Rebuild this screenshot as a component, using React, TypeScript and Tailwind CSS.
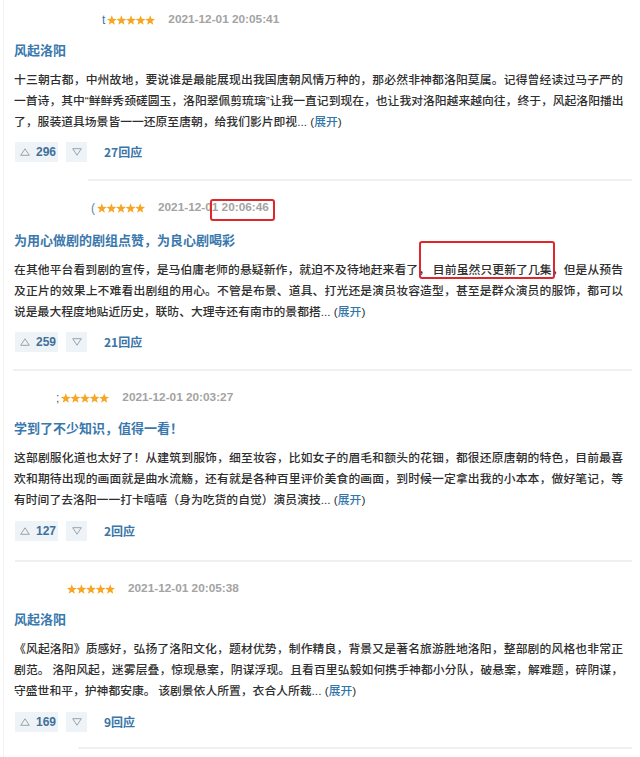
import React from "react";

type Card = {
  prefix: string;
  prefixClass: string;
  headerPl: string;
  date: string;
  title: string;
  lines: React.ReactNode[];
  last: React.ReactNode;
  up: string;
  replies: string;
  sepMl: string;
  titleMt: string;
  btnMt: string;
  sepMt: string;
};

const FONT = {
  fontFamily: '"Noto Sans CJK SC", "Liberation Sans", sans-serif',
};

function Stars() {
  const star = (cx: number) => {
    const pts: string[] = [];
    for (let i = 0; i < 10; i++) {
      const r = i % 2 === 0 ? 5.2 : 2.2;
      const a = (Math.PI / 5) * i - Math.PI / 2;
      pts.push(`${(cx + r * Math.cos(a)).toFixed(2)},${(5.5 + r * Math.sin(a)).toFixed(2)}`);
    }
    return <polygon key={cx} points={pts.join(" ")} fill="#f6a623" />;
  };
  return (
    <svg width="48" height="11" viewBox="0 0 48 11">
      {[4.8, 14.4, 24, 33.6, 43.2].map((c) => star(c))}
    </svg>
  );
}

function UpTri() {
  return (
    <svg width="10" height="8" viewBox="0 0 10 8">
      <polygon points="5,0.8 9.3,7.3 0.7,7.3" fill="none" stroke="#9aa3ab" strokeWidth="1" />
    </svg>
  );
}

function DownTri() {
  return (
    <svg width="10" height="8" viewBox="0 0 10 8">
      <polygon points="0.7,0.7 9.3,0.7 5,7.2" fill="none" stroke="#9aa3ab" strokeWidth="1" />
    </svg>
  );
}

const LAT = { fontFamily: '"Liberation Sans", sans-serif' };

const Expand = () => (
  <>
    <span style={LAT}>... (</span>
    <span className="text-[#3377aa]">展开</span>
    <span style={LAT}>)</span>
  </>
);

const Q = ({ c }: { c: string }) => <span style={LAT}>{c}</span>;

const cards: Card[] = [
  {
    prefix: "t",
    prefixClass: "text-[#3377aa]",
    headerPl: "pl-[98px]",
    date: "2021-12-01 20:05:41",
    title: "风起洛阳",
    lines: [
      "十三朝古都，中州故地，要说谁是最能展现出我国唐朝风情万种的，那必然非神都洛阳莫属。记得曾经读过马子严的",
      <>
        一首诗，其中<Q c="“" />鲜鲜秀颈磋圆玉，洛阳翠佩剪琉璃<Q c="”" />让我一直记到现在，也让我对洛阳越来越向往，终于，风起洛阳播出
      </>,
    ],
    last: (
      <>
        了，服装道具场景皆一一还原至唐朝，给我们影片即视
        <Expand />
      </>
    ),
    up: "296",
    replies: "27回应",
    sepMl: "ml-[84px]",
    titleMt: "mt-[10px]",
    btnMt: "mt-[11px]",
    sepMt: "mt-[17px]",
  },
  {
    prefix: "(",
    prefixClass: "text-[#5a86b0]",
    headerPl: "pl-[87px]",
    date: "2021-12-01 20:06:46",
    title: "为用心做剧的剧组点赞，为良心剧喝彩",
    lines: [
      "在其他平台看到剧的宣传，是马伯庸老师的悬疑新作，就迫不及待地赶来看了， 目前虽然只更新了几集，但是从预告",
      "及正片的效果上不难看出剧组的用心。不管是布景、道具、打光还是演员妆容造型，甚至是群众演员的服饰，都可以",
    ],
    last: (
      <>
        说是最大程度地贴近历史，联昉、大理寺还有南市的景都搭
        <Expand />
      </>
    ),
    up: "259",
    replies: "21回应",
    sepMl: "ml-[9px]",
    titleMt: "mt-[12px]",
    btnMt: "mt-[11px]",
    sepMt: "mt-[17px]",
  },
  {
    prefix: ";",
    prefixClass: "text-[#4a5a70]",
    headerPl: "pl-[52px]",
    date: "2021-12-01 20:03:27",
    title: "学到了不少知识，值得一看！",
    lines: [
      "这部剧服化道也太好了！从建筑到服饰，细至妆容，比如女子的眉毛和额头的花钿，都很还原唐朝的特色，目前最喜",
      "欢和期待出现的画面就是曲水流觞，还有就是各种百里评价美食的画面，到时候一定拿出我的小本本，做好笔记，等",
    ],
    last: (
      <>
        有时间了去洛阳一一打卡嘻嘻（身为吃货的自觉）演员演技
        <Expand />
      </>
    ),
    up: "127",
    replies: "2回应",
    sepMl: "ml-[11px]",
    titleMt: "mt-[10px]",
    btnMt: "mt-[12px]",
    sepMt: "mt-[19px]",
  },
  {
    prefix: "",
    prefixClass: "",
    headerPl: "pl-[63px]",
    date: "2021-12-01 20:05:38",
    title: "风起洛阳",
    lines: [
      "《风起洛阳》质感好，弘扬了洛阳文化，题材优势，制作精良，背景又是著名旅游胜地洛阳，整部剧的风格也非常正",
      "剧范。 洛阳风起，迷雾层叠，惊现悬案，阴谋浮现。且看百里弘毅如何携手神都小分队，破悬案，解难题，碎阴谋，",
    ],
    last: (
      <>
        守盛世和平，护神都安康。 该剧景依人所置，衣合人所裁
        <Expand />
      </>
    ),
    up: "169",
    replies: "9回应",
    sepMl: "ml-[74px]",
    titleMt: "mt-[10px]",
    btnMt: "mt-[12px]",
    sepMt: "mt-[15px]",
  },
];

function CardView({ c, idx }: { c: Card; idx: number }) {
  return (
    <div className={`relative ${idx === 0 ? "pt-[10px]" : "pt-[17px]"}`}>
      <div className={`flex h-[20px] items-center ${c.headerPl}`}>
        {c.prefix && (
          <span className={`mr-[2px] text-[12px] leading-none ${c.prefixClass}`} style={LAT}>
            {c.prefix}
          </span>
        )}
        <Stars />
        <span className="ml-[13px] text-[11.8px] font-semibold text-[#a3a3a3]" style={LAT}>
          {c.date}
        </span>
      </div>
      <div className={`${c.titleMt} h-[20px] pl-[10px] text-[13px] font-bold leading-[20px] text-[#3a78ad]`}>
        {c.title}
      </div>
      <div className="mt-[8px] w-[619px] pl-[10px] text-[11.8px] font-medium leading-[21px] text-[#2e2e2e]">
        {c.lines.map((l, i) => (
          <div
            key={i}
            className="h-[21px] overflow-visible whitespace-nowrap text-justify [text-align-last:justify]"
          >
            {l}
          </div>
        ))}
        <div className="h-[21px] overflow-visible whitespace-nowrap">{c.last}</div>
      </div>
      <div className={`${c.btnMt} flex h-[20px] items-center pl-[11px]`}>
        <div className="flex h-[20px] w-[43px] items-center bg-[#eef3f7] pl-[5px]">
          <UpTri />
          <span className="ml-[6px] text-[12px] font-bold text-[#41709a]" style={LAT}>
            {c.up}
          </span>
        </div>
        <div className="ml-[8px] flex h-[20px] w-[21px] items-center justify-center bg-[#eef3f7]">
          <DownTri />
        </div>
        <span className="ml-[17px] text-[12px] font-bold text-[#3a75a8]">{c.replies}</span>
      </div>
      <div className={`${c.sepMt} ${c.sepMl} mr-[8px] h-[2px] bg-[#f0f0f0]`} />
      {idx === 1 && (
        <>
          <div className="absolute left-[206px] top-[18px] h-[22px] w-[65px] rounded-[3px] border-2 border-[#e0262b]" />
          <div className="absolute left-[415px] top-[60px] h-[38px] w-[136px] rounded-[3px] border-2 border-[#e0262b]" />
        </>
      )}
    </div>
  );
}

export default function App() {
  return (
    <div className="h-[757px] w-[640px] overflow-hidden bg-white pl-[3px]" style={FONT}>
      <div className="h-full border-l border-[#f2f2f2]">
        {cards.map((c, i) => (
          <CardView key={i} c={c} idx={i} />
        ))}
      </div>
    </div>
  );
}
